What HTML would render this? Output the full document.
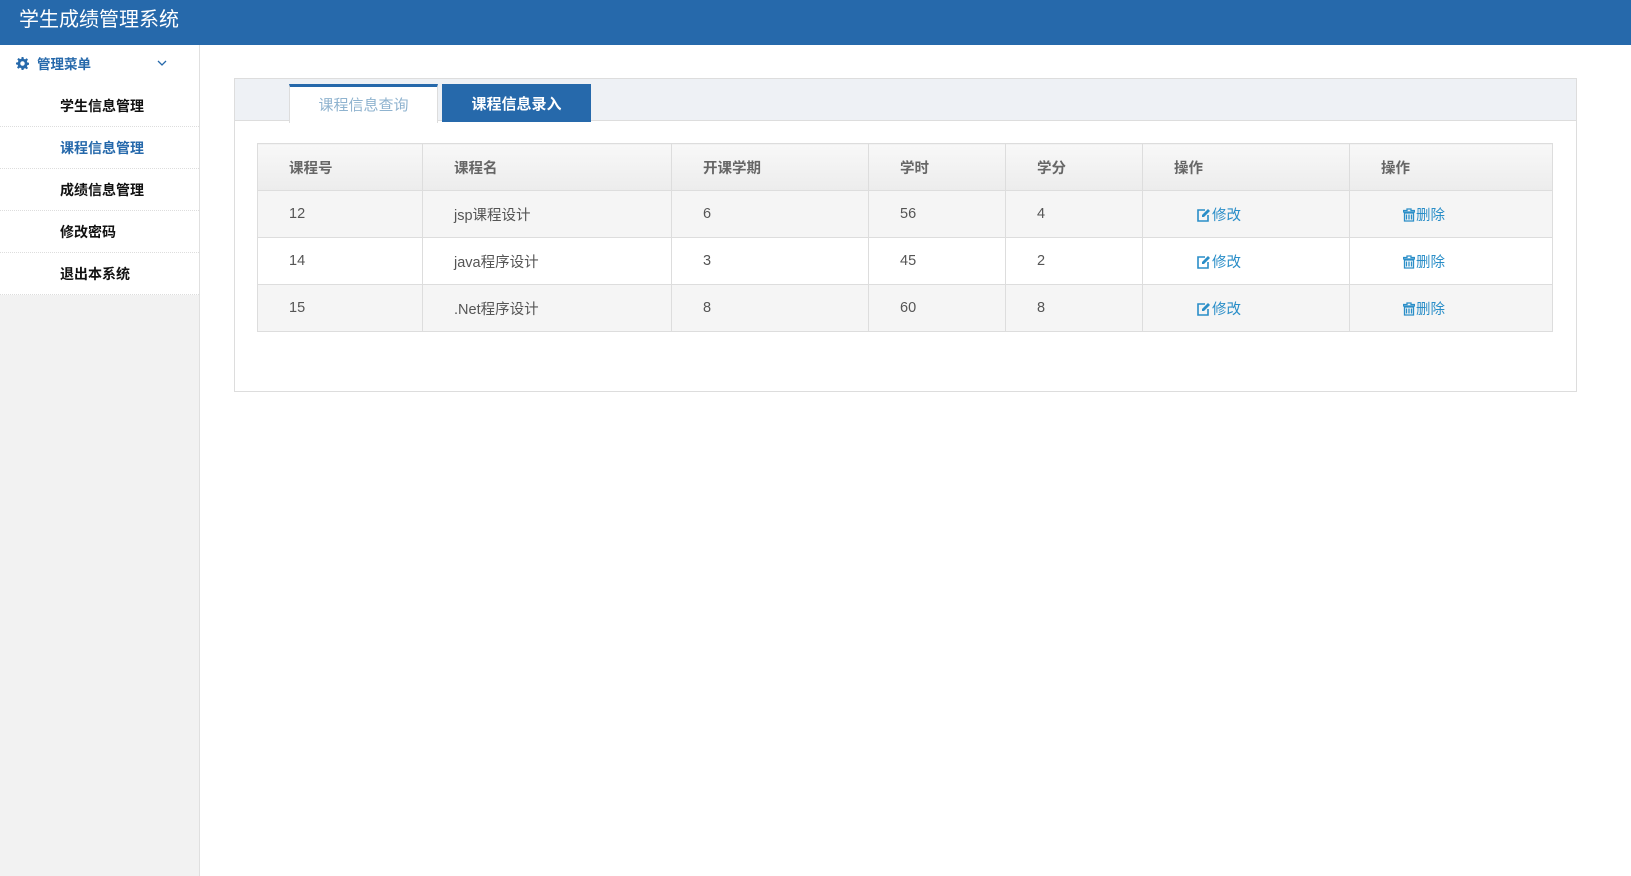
<!DOCTYPE html>
<html><head><meta charset="utf-8"><style>
*{margin:0;padding:0;box-sizing:border-box}
body{width:1631px;height:876px;overflow:hidden;background:#fff;font-family:"Liberation Sans","Noto Sans CJK SC",sans-serif;font-size:14px;color:#333;position:relative}
.hd{position:absolute;left:0;top:0;width:1631px;height:45px;background:#2669ab;color:#fff;font-size:20px;line-height:40px;padding-left:19px}
.sb{position:absolute;left:0;top:45px;width:200px;height:831px;background:#f2f2f2;border-right:1px solid #e0e0e0}
.mh{height:40px;background:#fff;line-height:40px;padding-left:16px;color:#2669ab;font-weight:bold;font-size:13.5px;position:relative}
.mh svg{vertical-align:-1px;margin-right:8px}
.mh .ar{position:absolute;right:24px;top:15px}
.it{height:42px;line-height:42px;background:#fff;border-bottom:1px dotted #ddd;padding-left:60px;font-weight:bold;font-size:14px;color:#111}
.it.on{color:#2669ab}
.pn{position:absolute;left:234px;top:78px;width:1343px;height:314px;border:1px solid #ddd;background:#fff}
.tb{height:42px;background:#eef1f5;border-bottom:1px solid #ddd;position:relative}
.t1{position:absolute;left:54px;top:5px;width:149px;height:39px;background:#fff;border-top:3px solid #2669ab;border-left:1px solid #ddd;border-right:1px solid #ddd;color:#8fb3cf;text-align:center;line-height:37px;font-size:15px}
.t2{position:absolute;left:207px;top:5px;width:149px;height:38px;background:#2669ab;color:#fff;text-align:center;line-height:42px;font-size:15px;font-weight:bold}
table{position:absolute;left:22px;top:64px;border-collapse:collapse;width:1296px}
td,th{border:1px solid #ddd;height:47px;padding-left:31px;text-align:left;font-size:14.5px;color:#555;vertical-align:middle}
th{background:linear-gradient(#f8f8f8,#ececec);font-weight:bold;color:#666}
tr.g td{background:#f5f5f5}
td.a{padding-left:53px;color:#2a8ec8}
td.a svg{vertical-align:-2px;margin-right:1px}
</style></head><body>
<div class="hd">学生成绩管理系统</div>
<div class="sb">
<div class="mh"><svg width="13" height="13" viewBox="0 0 14 14"><path fill="#2669ab" d="M6 0h2l.4 2 1.4.6 1.7-1.2 1.4 1.4-1.2 1.7.6 1.4 2 .4v2l-2 .4-.6 1.4 1.2 1.7-1.4 1.4-1.7-1.2-1.4.6L8 14H6l-.4-2-1.4-.6-1.7 1.2-1.4-1.4 1.2-1.7L1.7 8.4 0 8V6l2-.4.6-1.4-1.2-1.7 1.4-1.4 1.7 1.2 1.4-.6z M7 4.6a2.4 2.4 0 1 0 0 4.8 2.4 2.4 0 1 0 0-4.8z" fill-rule="evenodd"/></svg>管理菜单<svg class="ar" width="10" height="7" viewBox="0 0 10 7"><path d="M1 1l4 4 4-4" fill="none" stroke="#2669ab" stroke-width="1.3"/></svg></div>
<div class="it">学生信息管理</div>
<div class="it on">课程信息管理</div>
<div class="it">成绩信息管理</div>
<div class="it">修改密码</div>
<div class="it">退出本系统</div>
</div>
<div class="pn">
<div class="tb"><div class="t1">课程信息查询</div><div class="t2">课程信息录入</div></div>
<table>
<tr><th style="width:165px">课程号</th><th style="width:249px">课程名</th><th style="width:197px">开课学期</th><th style="width:137px">学时</th><th style="width:137px">学分</th><th style="width:207px">操作</th><th>操作</th></tr>
<tr class="g"><td>12</td><td>jsp课程设计</td><td>6</td><td>56</td><td>4</td><td class="a"><svg width="15" height="14" viewBox="0 0 15 14"><path d="M9 2H2v11h10V7" fill="none" stroke="#2a8ec8" stroke-width="1.6"/><path d="M12 1l2 2-6 6H6V7z" fill="#2a8ec8"/></svg>修改</td><td class="a"><svg width="12" height="14" viewBox="0 0 12 14"><path d="M4 1h4v1.5h3.5v1.5h-11V2.5H4zM1.5 5h9v8h-9z M3.5 6.5v5M6 6.5v5M8.5 6.5v5" fill="none" stroke="#2a8ec8" stroke-width="1.3"/></svg>删除</td></tr>
<tr><td>14</td><td>java程序设计</td><td>3</td><td>45</td><td>2</td><td class="a"><svg width="15" height="14" viewBox="0 0 15 14"><path d="M9 2H2v11h10V7" fill="none" stroke="#2a8ec8" stroke-width="1.6"/><path d="M12 1l2 2-6 6H6V7z" fill="#2a8ec8"/></svg>修改</td><td class="a"><svg width="12" height="14" viewBox="0 0 12 14"><path d="M4 1h4v1.5h3.5v1.5h-11V2.5H4zM1.5 5h9v8h-9z M3.5 6.5v5M6 6.5v5M8.5 6.5v5" fill="none" stroke="#2a8ec8" stroke-width="1.3"/></svg>删除</td></tr>
<tr class="g"><td>15</td><td>.Net程序设计</td><td>8</td><td>60</td><td>8</td><td class="a"><svg width="15" height="14" viewBox="0 0 15 14"><path d="M9 2H2v11h10V7" fill="none" stroke="#2a8ec8" stroke-width="1.6"/><path d="M12 1l2 2-6 6H6V7z" fill="#2a8ec8"/></svg>修改</td><td class="a"><svg width="12" height="14" viewBox="0 0 12 14"><path d="M4 1h4v1.5h3.5v1.5h-11V2.5H4zM1.5 5h9v8h-9z M3.5 6.5v5M6 6.5v5M8.5 6.5v5" fill="none" stroke="#2a8ec8" stroke-width="1.3"/></svg>删除</td></tr>
</table>
</div>
</body></html>
